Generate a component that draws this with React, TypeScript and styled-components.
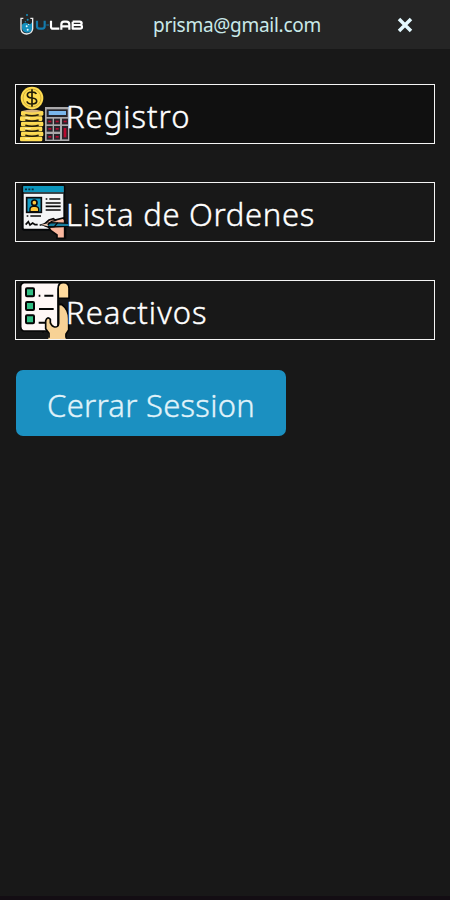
import React from 'react';
import styled, { createGlobalStyle } from 'styled-components';

const GlobalStyle = createGlobalStyle`
  * { box-sizing: border-box; }
  body { margin: 0; background: #181818; }
`;

const Page = styled.div`
  height: 900px;
  background: #181818;
  border-bottom: 4px solid #130d13;
  font-family: 'Noto Sans', 'Open Sans', sans-serif;
  color: #fff;
  overflow: hidden;
`;

const Header = styled.header`
  display: flex;
  align-items: center;
  height: 49px;
  padding-left: 18px;
  background: #252525;
`;

const Logo = styled.svg`
  width: 68px;
  height: 28px;
  flex: none;
`;

const Email = styled.span`
  margin-left: 67px;
  width: 170px;
  font-size: 19px;
  line-height: 26px;
  letter-spacing: -0.28px;
  padding-top: 1px;
  color: #c9e9e9;
  white-space: nowrap;
`;

const CloseButton = styled.button`
  display: flex;
  margin: 0 0 0 74px;
  padding: 0;
  border: 0;
  background: none;

  svg { width: 16px; height: 16px; }
`;

const Menu = styled.nav`
  display: flex;
  flex-direction: column;
  gap: 38px;
  padding: 35px 15px 0;
`;

const MenuItem = styled.a<{ $active?: boolean }>`
  display: flex;
  align-items: center;
  height: 60px;
  border: 1px solid #f4f4f4;
  background: ${({ $active }) => ($active ? '#101010' : '#181818')};
`;

const MenuIcon = styled.svg`
  flex: none;
  width: 56px;
  height: 58px;
  margin-right: -7px;
`;

const Label = styled.span<{ $spacing: number }>`
  padding-top: 3px;
  padding-left: 1px;
  font-size: 31px;
  font-weight: 300;
  line-height: 44px;
  letter-spacing: ${({ $spacing }) => $spacing}px;
  -webkit-text-stroke: 0.4px currentColor;
  white-space: nowrap;
`;

const LogoutButton = styled.button`
  display: block;
  width: 270px;
  height: 66px;
  margin: 30px 0 0 16px;
  padding: 3px 0 0;
  border: 0;
  border-radius: 7px;
  background: #1b90c1;
  color: #e0f3fa;
  font: 300 31px/44px 'Noto Sans', 'Open Sans', sans-serif;
  letter-spacing: 0.26px;
  -webkit-text-stroke: 0.35px currentColor;
  white-space: nowrap;
`;

const UlabLogo = () => (
  <Logo viewBox="54 33 204 84" aria-label="U-LAB">
    <path d="M65 75Q74 64 82 70Q90 77 97 65V87Q96 98 81 98Q67 97 66 85Z" fill="#168fbd" />
    <path d="M70 55H63V88Q65 101 80 102Q96 101 98 87V55H91" fill="none" stroke="#eee" strokeWidth="4" />
    <g fill="#168fbd"><circle cx="81" cy="45" r="3" /><circle cx="83" cy="59" r="3" /><circle cx="76" cy="65" r="2" /></g>
    <g fill="#e5f8fc"><circle cx="80" cy="79" r="3" /><circle cx="86" cy="73" r="2" /><circle cx="83" cy="89" r="3" /></g>
    <g fill="none" strokeWidth="6.5" strokeLinejoin="round">
      <path d="M111 62V79Q111 86 118 86H127Q134 86 134 79V62" stroke="#147bad" />
      <path d="M139 75H147" stroke="#147bad" strokeWidth="3" />
      <path d="M153 62V80Q153 86 159 86H178M184 89V74Q184 65 192 65H199Q208 65 208 74V89M184 79H208M218 65H239Q245 65 245 70Q245 75 239 75H219H240Q246 75 246 81Q246 86 240 86H218V65" stroke="#fff" />
    </g>
  </Logo>
);

const discTops = [99, 115, 131, 146, 161, 176];

const RegisterIcon = () => (
  <MenuIcon viewBox="18 21 168 174">
    {discTops.map((y, i) => {
      const left = i % 2 ? 30 : 33;
      return <rect key={y} x={left} y={y} width="67" height="14" rx="4" fill="#ffdc54" />;
    })}
    <path d="M40 109H92M40 125H92M40 140H92M40 155H92M40 170H92" stroke="#f3cf50" strokeWidth="5" />
    {discTops.slice(0, 5).map((y) => (
      <path key={y} d={`M46 ${y + 11}Q66 ${y + 17} 86 ${y + 11}`} fill="none" stroke="#241c09" strokeWidth="4.5" />
    ))}
    <path d="M46 120H60M45 152H62M46 182H60" stroke="#fff0a6" strokeWidth="4" />
    <path d="M36 99Q66 90 96 99Q66 108 36 99Z" fill="#d8b37a" />
    <circle cx="66" cy="60" r="34" fill="#ffdc50" />
    <circle cx="66" cy="60" r="27" fill="none" stroke="#d1ad37" strokeWidth="3" />
    <path d="M79 48Q76 42 66 42Q52 42 52 51Q52 59 66 60Q80 61 80 70Q80 78 66 78Q53 78 51 70M66 34V86" fill="none" stroke="#211c08" strokeWidth="5" />
    <path d="M105 87H178V189H105Z" fill="#aaa9ab" />
    <path d="M110 94H173V117H110Z" fill="#24232a" />
    <path d="M116 99H168V111H116Z" fill="#79b6ec" />
    {[122, 144, 168].map((y, row) => [110, 132, 156].map((x, col) => {
      if (row === 2 && col === 2) return null;
      const tall = row === 1 && col === 2;
      return (
        <g key={`${x}-${y}`}>
          <rect x={x} y={y} width="18" height={tall ? 40 : 17} fill="#29242b" />
          <rect x={x + 5} y={y + 6} width={tall ? 8 : 9} height={tall ? 28 : 5} fill="#b9092f" />
        </g>
      );
    }))}
  </MenuIcon>
);

const OrdersIcon = () => (
  <MenuIcon viewBox="18 21 168 174">
    <rect x="38" y="27" width="125" height="134" rx="5" fill="#f4f5f6" stroke="#050708" strokeWidth="6" />
    <path d="M40 30H161V49H40Z" fill="#0b96bd" />
    <path d="M39 51H161" stroke="#071014" strokeWidth="5" />
    <path d="M45 40H51M55 40H61M65 40H71" stroke="#092d3e" strokeWidth="5" />
    <rect x="50" y="65" width="44" height="44" fill="#159dc5" stroke="#090b0c" strokeWidth="5" />
    <path d="M60 107V98Q62 91 69 91H76Q84 91 86 98V107Z" fill="#ffc83b" stroke="#090b0c" strokeWidth="4" />
    <circle cx="73" cy="80" r="8" fill="#ffc83b" stroke="#090b0c" strokeWidth="5" />
    <path d="M107 69H112M118 69H151M107 81H152M107 91H152M107 102H152M50 120H55M61 120H93" stroke="#080808" strokeWidth="5" />
    <path d="M47 146L55 137L60 147L68 141L75 146H83M89 147H94" fill="none" stroke="#080808" strokeWidth="5" />
    <path d="M102 145L117 132L130 128L135 132L160 126L164 132V187H141V177L123 164L116 154L103 148Z" fill="#f9b79e" stroke="#080808" strokeWidth="5" />
    <path d="M94 146L122 140L177 142V151L120 153Z" fill="#187c9c" stroke="#080808" strokeWidth="4" />
    <path d="M94 146L114 142V151Z" fill="#f4d0b9" />
    <path d="M113 147L125 136L139 133M119 153L133 152L143 140" fill="none" stroke="#080808" strokeWidth="4" />
    <path d="M167 156V188" fill="none" stroke="#080808" strokeWidth="4" />
  </MenuIcon>
);

const ReagentsIcon = () => (
  <MenuIcon viewBox="18 21 168 174">
    <path d="M144 38Q147 26 160 26Q177 26 177 43V73H145Z" fill="#ffda9c" stroke="#050505" strokeWidth="5" />
    <path d="M41 26H151Q144 33 144 45V171H40Q32 168 32 158V36Q33 28 41 26Z" fill="#fff7f6" stroke="#050505" strokeWidth="5" />
    {[55, 96, 136].map((y) => (
      <rect key={y} x="48" y={y - 12} width="24" height="24" rx="3" fill="#32bd83" stroke="#050505" strokeWidth="6" />
    ))}
    <path d="M86 65H91M103 65H130M87 105H131M86 146H112" stroke="#050505" strokeWidth="6" />
    <path d="M115 196V177L107 163V139Q110 129 118 133L130 156Q139 164 144 154V94H155Q175 106 175 134V170L167 182V196Z" fill="#f7d296" />
    <path d="M117 191V178L107 164V140Q112 126 121 136V147Q126 158 134 159Q145 160 146 148V78M148 91H155Q176 107 176 134V168L168 180V191" fill="none" stroke="#050505" strokeWidth="5" />
    <path d="M99 171V176" stroke="#050505" strokeWidth="4" />
  </MenuIcon>
);

export default function App() {
  return (
    <Page>
      <GlobalStyle />
      <Header>
        <UlabLogo />
        <Email>prisma@gmail.com</Email>
        <CloseButton aria-label="Cerrar">
          <svg viewBox="0 0 16 16"><path d="M2 2L14 14M14 2L2 14" stroke="#e4f9ff" strokeWidth="3.5" /></svg>
        </CloseButton>
      </Header>
      <Menu>
        <MenuItem $active><RegisterIcon /><Label $spacing={1}>Registro</Label></MenuItem>
        <MenuItem><OrdersIcon /><Label $spacing={0.7}>Lista de Ordenes</Label></MenuItem>
        <MenuItem><ReagentsIcon /><Label $spacing={1.05}>Reactivos</Label></MenuItem>
      </Menu>
      <LogoutButton>Cerrar Session</LogoutButton>
    </Page>
  );
}
